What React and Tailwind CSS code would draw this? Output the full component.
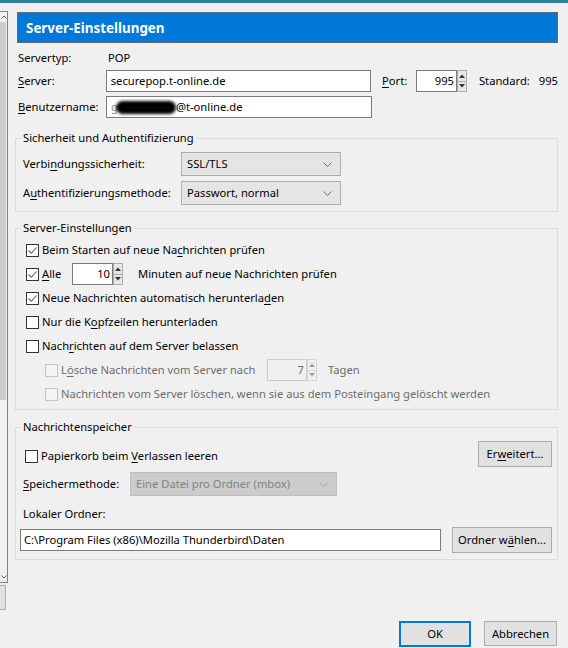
import React from "react";
import clsx from "clsx";

// access-key underline
function U({ children }) {
  return <span className="underline underline-offset-[2px] decoration-[1px]">{children}</span>;
}

function Check({ checked, disabled }) {
  return (
    <span
      className={clsx(
        "w-[13px] h-[13px] border flex items-center justify-center shrink-0",
        disabled ? "border-[#c4c4c4] bg-[#f4f4f4]" : "border-[#333333] bg-white"
      )}
    >
      {checked && (
        <svg width="11" height="11" viewBox="0 0 11 11">
          <polyline points="1.5,5.5 4.3,8.3 9.5,2.5" fill="none" stroke="#5a5a5a" strokeWidth="1.1" />
        </svg>
      )}
    </span>
  );
}

function Spin({ value, w, disabled }) {
  return (
    <div className="flex h-[22px] shrink-0">
      <div
        className={clsx(
          "h-full border flex items-center justify-end pr-[2px]",
          w,
          disabled ? "border-[#cccccc] bg-[#f0f0f0] text-[#6d6d6d]" : "border-[#7a7a7a] bg-white"
        )}
      >
        {value}
      </div>
      <div className="w-[10px] h-full flex flex-col">
        {[0, 1].map((i) => (
          <div
            key={i}
            className={clsx(
              "flex-1 border flex items-center justify-center",
              i === 1 && "border-t-0",
              disabled ? "border-[#d6d6d6] bg-[#f0f0f0]" : "border-[#adadad] bg-[#e6e6e6]"
            )}
          >
            <svg width="6" height="4" viewBox="0 0 6 4">
              <polygon
                points={i === 0 ? "0,4 3,0.5 6,4" : "0,0 3,3.5 6,0"}
                fill={disabled ? "#a0a0a0" : "#333333"}
              />
            </svg>
          </div>
        ))}
      </div>
    </div>
  );
}

function Select({ value, w, disabled }) {
  return (
    <div
      className={clsx(
        "h-[24px] border flex items-center justify-between pl-[5px] pr-[8px] shrink-0",
        w,
        disabled ? "border-[#bfbfbf] bg-[#cccccc] text-[#838383]" : "border-[#adadad] bg-[#e5e5e5]"
      )}
    >
      <span>{value}</span>
      <svg width="9" height="5" viewBox="0 0 9 5">
        <polyline points="0.5,0.5 4.5,4.5 8.5,0.5" fill="none" stroke={disabled ? "#a8a8a8" : "#707070"} strokeWidth="1" />
      </svg>
    </div>
  );
}

function Btn({ children, w }) {
  return (
    <div className={clsx("h-[26px] border border-[#adadad] bg-[#e1e1e1] flex items-center justify-center", w)}>
      {children}
    </div>
  );
}

function Row({ children, className }) {
  return <div className={clsx("h-[24px] flex items-center whitespace-nowrap", className)}>{children}</div>;
}

function LeftStrip() {
  return (
    <div className="w-[8px] shrink-0">
      <div className="mt-[8px] h-[572px] border-t border-r border-b border-[#828282] flex flex-col">
        <div className="h-[10px] flex items-center justify-center">
          <svg width="6" height="4" viewBox="0 0 6 4">
            <polyline points="0.5,3.5 3,1 5.5,3.5" fill="none" stroke="#606060" strokeWidth="1" />
          </svg>
        </div>
        <div className="h-[378px] bg-[#cdcdcd] mr-[1px]" />
        <div className="flex-1 bg-[#f0f0f0]" />
        <div className="h-[10px] flex items-center justify-center">
          <svg width="6" height="4" viewBox="0 0 6 4">
            <polyline points="0.5,0.5 3,3 5.5,0.5" fill="none" stroke="#606060" strokeWidth="1" />
          </svg>
        </div>
      </div>
      <div className="mt-[2px] w-[6px] h-[25px] border border-l-0 border-[#adadad] bg-[#e1e1e1]" />
    </div>
  );
}

export default function App() {
  return (
    <div className="w-[568px] h-[648px] bg-[#f0f0f0] text-[11.2px] leading-[16px] text-black font-['Noto_Sans',sans-serif] overflow-hidden">
      <div className="h-[3px] bg-[#2f7f9c]" />
      <div className="flex">
        <LeftStrip />
        <main className="ml-[7px] w-[543px]">
          <div className="mt-[9px] ml-[2px] h-[31px] bg-[#0078d7] border border-[#5b6b78] flex items-center pl-[8px] text-white font-bold text-[13.4px]">
            Server-Einstellungen
          </div>

          <div className="mt-[4px] h-[22px] flex items-center pl-[3px]">
            <span className="w-[88px]">Servertyp:</span>
            <span className="pl-[2px]">POP</span>
          </div>
          <div className="mt-[1px] h-[22px] flex items-center pl-[3px]">
            <span className="w-[88px]">
              <U>S</U>erver:
            </span>
            <div className="w-[266px] h-[22px] border border-[#7a7a7a] bg-white flex items-center pl-[4px]">
              securepop.t-online.de
            </div>
            <span className="ml-[11px] w-[34px]">
              <U>P</U>ort:
            </span>
            <Spin value="995" w="w-[41px]" />
            <span className="ml-[12px] w-[60px]">Standard:</span>
            <span>995</span>
          </div>
          <div className="mt-[4px] h-[22px] flex items-center pl-[3px]">
            <span className="w-[88px]">
              <U>B</U>enutzername:
            </span>
            <div className="w-[266px] h-[22px] border border-[#7a7a7a] bg-white flex items-center pl-[4px]">
              <span className="text-[#888888]">g</span>
              <span className="-ml-[2px] w-[60px] h-[13px] rounded-full bg-black blur-[1.5px]" />
              <span>@t-online.de</span>
            </div>
          </div>

          <fieldset className="mt-[12px] border border-[#dcdcdc] pl-[7px] pb-[6px]">
            <legend className="px-[2px] -ml-[2px]">Sicherheit und Authentifizierung</legend>
            <div className="mt-[6px] h-[24px] flex items-center">
              <span className="w-[158px]">
                Verbi<U>n</U>dungssicherheit:
              </span>
              <Select value="SSL/TLS" w="w-[160px]" />
            </div>
            <div className="mt-[5px] h-[24px] flex items-center">
              <span className="w-[158px]">
                A<U>u</U>thentifizierungsmethode:
              </span>
              <Select value="Passwort, normal" w="w-[160px]" />
            </div>
          </fieldset>

          <fieldset className="mt-[8px] border border-[#dcdcdc] pl-[10px] pb-[3px]">
            <legend className="px-[2px] ml-[-5px]">Server-Einstellungen</legend>
            <Row className="mt-[2px] gap-[3px]">
              <Check checked />
              <span>
                Beim Starten auf neue Na<U>c</U>hrichten prüfen
              </span>
            </Row>
            <Row className="gap-[3px]">
              <Check checked />
              <span className="w-[27px]">
                <U>A</U>lle
              </span>
              <Spin value="10" w="w-[41px]" />
              <span className="ml-[12px]">Minuten auf neue Nachrichten prüfen</span>
            </Row>
            <Row className="gap-[3px]">
              <Check checked />
              <span>
                Neue Nachrichten automatisch herunterla<U>d</U>en
              </span>
            </Row>
            <Row className="gap-[3px]">
              <Check />
              <span>
                Nur die K<U>o</U>pfzeilen herunterladen
              </span>
            </Row>
            <Row className="gap-[3px]">
              <Check />
              <span>
                Nach<U>r</U>ichten auf dem Server belassen
              </span>
            </Row>
            <Row className="pl-[19px] gap-[3px] text-[#6d6d6d]">
              <Check disabled />
              <span className="w-[203px]">
                L<U>ö</U>sche Nachrichten vom Server nach
              </span>
              <Spin value="7" w="w-[40px]" disabled />
              <span className="ml-[8px]">Tagen</span>
            </Row>
            <Row className="pl-[19px] gap-[3px] text-[#6d6d6d]">
              <Check disabled />
              <span>Nachrichten vom Server löschen, wenn sie aus dem Posteingang gelöscht werden</span>
            </Row>
          </fieldset>

          <fieldset className="mt-[9px] border border-[#dcdcdc] pl-[4px] pr-[5px] pb-[7px]">
            <legend className="px-[2px] ml-[1px]">Nachrichtenspeicher</legend>
            <div className="mt-[6px] h-[26px] flex justify-between">
              <div className="self-end mb-[3px] ml-[5px] flex items-center gap-[3px]">
                <Check />
                <span>
                  Papierkorb beim <U>V</U>erlassen leeren
                </span>
              </div>
              <Btn w="w-[74px]">
                Er<U>w</U>eitert...
              </Btn>
            </div>
            <div className="mt-[5px] h-[24px] flex items-center ml-[3px]">
              <span className="w-[107px]">
                <U>S</U>peichermethode:
              </span>
              <Select value="Eine Datei pro Ordner (mbox)" w="w-[207px]" disabled />
            </div>
            <div className="mt-[10px] h-[16px] ml-[3px]">Lokaler Ordner:</div>
            <div className="mt-[5px] h-[25px] flex items-center">
              <div className="w-[421px] h-[22px] border border-[#7a7a7a] bg-white flex items-center pl-[3px]">
                C:\Program Files (x86)\Mozilla Thunderbird\Daten
              </div>
              <div className="ml-[11px]">
                <Btn w="w-[100px]">
                  Ordner w<U>ä</U>hlen...
                </Btn>
              </div>
            </div>
          </fieldset>

          <div className="mt-[61px] flex justify-end mr-[1px]">
            <div className="w-[72px] h-[26px] border-2 border-[#0078d7] bg-[#e1e1e1] flex items-center justify-center">
              OK
            </div>
            <div className="ml-[13px] w-[73px] h-[25px] border border-[#adadad] bg-[#e1e1e1] flex items-center justify-center">
              Abbrechen
            </div>
          </div>
        </main>
      </div>
    </div>
  );
}
